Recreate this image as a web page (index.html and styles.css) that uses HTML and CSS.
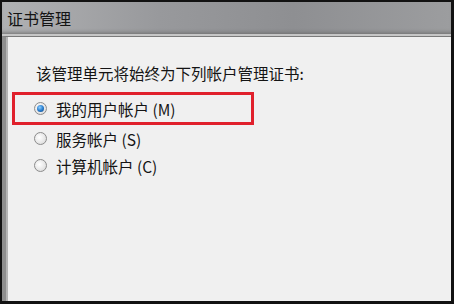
FILE: index.html
```html
<!DOCTYPE html>
<html lang="zh-CN">
<head>
  <meta charset="UTF-8">
  <title>证书管理</title>
  <link rel="stylesheet" href="styles.css">
</head>
<body>
  <div class="window">
    <div class="titlebar">证书管理</div>
    <div class="panel">
      <div class="intro">该管理单元将始终为下列帐户管理证书:</div>
      <div class="options">
        <div class="option selected"><span class="radio checked"></span>我的用户帐户 (M)</div>
        <div class="option"><span class="radio"></span>服务帐户 (S)</div>
        <div class="option"><span class="radio"></span>计算机帐户 (C)</div>
      </div>
    </div>
  </div>
</body>
</html>
```

FILE: styles.css
```css
* {
  box-sizing: border-box;
}

body {
  margin: 0;
  background-color: #121212;
  font-family: "Noto Sans CJK SC", "Noto Sans", sans-serif;
  color: #141414;
}

.window {
  width: 454px;
  height: 304px;
  border: 2px solid #121212;
  border-right-width: 3px;
  border-bottom-width: 3px;
  display: flex;
  flex-direction: column;
}

.titlebar {
  height: 34px;
  padding-left: 5px;
  display: flex;
  align-items: center;
  font-size: 16px;
  background: linear-gradient(to right, #b0b1b3 0%, #98999c 35%, #8e8f92 65%, #9c9d9f 100%);
  border-bottom: 2px solid #c6c6c6;
  box-shadow: inset 0 -4px 4px -3px #6c6c6c;
}

.panel {
  flex: 1;
  background-color: #f0f0f0;
  border-top: 1px solid #7a7a7a;
  border-left: 4px solid #8e8e8e;
  box-shadow: inset 2px 0 0 #b4b4b4;
}

.intro {
  margin: 26px 0 9px 30px;
  font-size: 15.5px;
  line-height: 20px;
}

.options {
  margin-left: 6px;
  font-size: 15.5px;
}

.option {
  height: 27px;
  padding-left: 22px;
  display: flex;
  align-items: center;
}

.option.selected {
  width: 242px;
  height: 33px;
  padding-left: 19px;
  border: 3px solid #e0202c;
}

.radio {
  width: 13px;
  height: 13px;
  margin-right: 9px;
  border-radius: 50%;
  border: 1px solid #8c8c8c;
  background: radial-gradient(circle at 40% 40%, #ffffff 0%, #e6e6e6 60%, #cfcfcf 100%);
  display: flex;
  align-items: center;
  justify-content: center;
}

.radio.checked::after {
  content: "";
  width: 7px;
  height: 7px;
  border-radius: 50%;
  background: radial-gradient(circle at 40% 35%, #8fd0ff 0%, #2a7fd0 50%, #0c3f7a 100%);
}
```
